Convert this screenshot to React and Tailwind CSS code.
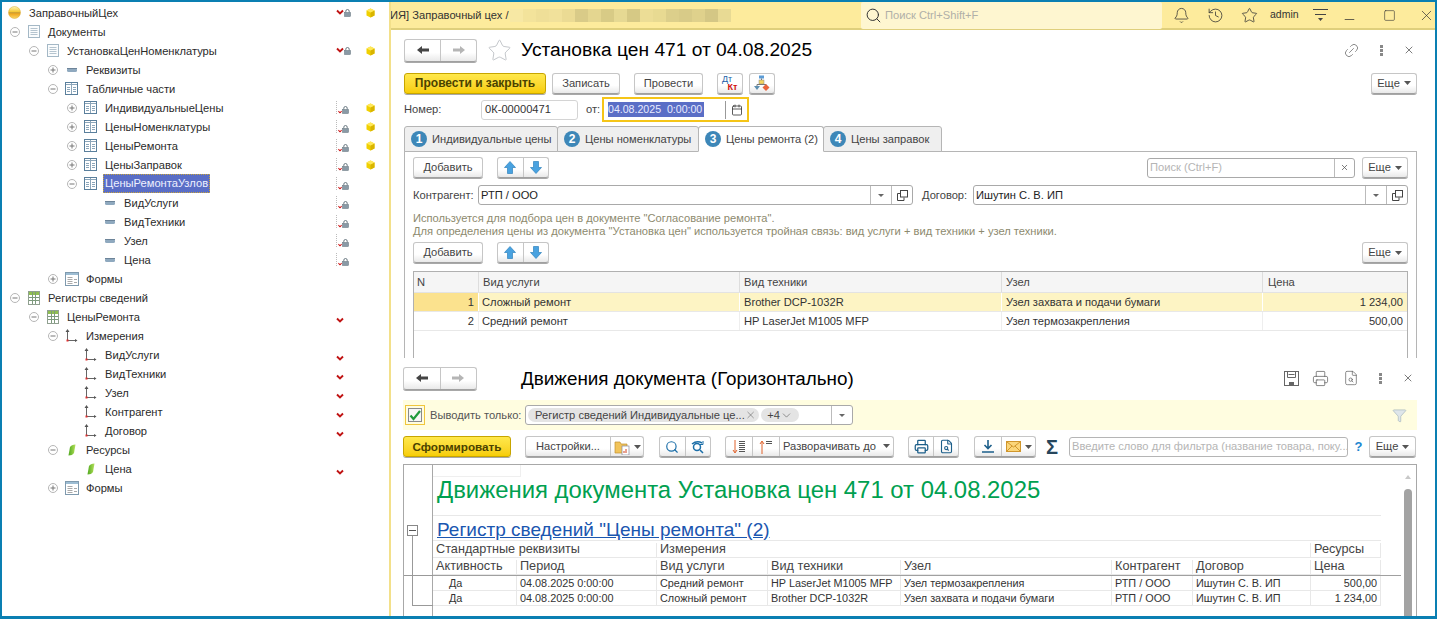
import { Bell, History, Star, Link2, X, Square, Minus, Search, Printer, FileSearch, Calendar, Funnel, ChevronDown } from 'lucide-react'

// tree data
const treeRows = [
  { pl: 'pl-[3px]', icon: 'root', text: 'ЗаправочныйЦех', flag: 'full', cube: true, noToggleCell: true },
  { pl: 'pl-[3px]', toggle: '-', icon: 'doc', text: 'Документы' },
  { pl: 'pl-[22px]', toggle: '-', icon: 'doc', text: 'УстановкаЦенНоменклатуры', flag: 'full', cube: true },
  { pl: 'pl-[41px]', toggle: '+', icon: 'attr', text: 'Реквизиты' },
  { pl: 'pl-[41px]', toggle: '-', icon: 'table', text: 'Табличные части' },
  { pl: 'pl-[60px]', toggle: '+', icon: 'table', text: 'ИндивидуальныеЦены', flag: 'small', cube: true },
  { pl: 'pl-[60px]', toggle: '+', icon: 'table', text: 'ЦеныНоменклатуры', flag: 'small', cube: true },
  { pl: 'pl-[60px]', toggle: '+', icon: 'table', text: 'ЦеныРемонта', flag: 'small', cube: true },
  { pl: 'pl-[60px]', toggle: '+', icon: 'table', text: 'ЦеныЗаправок', flag: 'small', cube: true },
  { pl: 'pl-[60px]', toggle: '-', icon: 'table', text: 'ЦеныРемонтаУзлов', flag: 'small', selected: true },
  { pl: 'pl-[79px]', icon: 'attr', text: 'ВидУслуги', flag: 'small' },
  { pl: 'pl-[79px]', icon: 'attr', text: 'ВидТехники', flag: 'small' },
  { pl: 'pl-[79px]', icon: 'attr', text: 'Узел', flag: 'small' },
  { pl: 'pl-[79px]', icon: 'attr', text: 'Цена', flag: 'small' },
  { pl: 'pl-[41px]', toggle: '+', icon: 'form', text: 'Формы' },
  { pl: 'pl-[3px]', toggle: '-', icon: 'reg', text: 'Регистры сведений' },
  { pl: 'pl-[22px]', toggle: '-', icon: 'reg', text: 'ЦеныРемонта', flag: 'check' },
  { pl: 'pl-[41px]', toggle: '-', icon: 'axes', text: 'Измерения' },
  { pl: 'pl-[60px]', icon: 'axes', text: 'ВидУслуги', flag: 'check' },
  { pl: 'pl-[60px]', icon: 'axes', text: 'ВидТехники', flag: 'check' },
  { pl: 'pl-[60px]', icon: 'axes', text: 'Узел', flag: 'check' },
  { pl: 'pl-[60px]', icon: 'axes', text: 'Контрагент', flag: 'check' },
  { pl: 'pl-[60px]', icon: 'axes', text: 'Договор', flag: 'check' },
  { pl: 'pl-[41px]', toggle: '-', icon: 'leaf', text: 'Ресурсы' },
  { pl: 'pl-[60px]', icon: 'leaf', text: 'Цена', flag: 'check' },
  { pl: 'pl-[41px]', toggle: '+', icon: 'form', text: 'Формы' },
]

const blurBlocks = ['#f7e8a4', '#f3e39b', '#efdf98', '#f1e19b', '#ebdb94', '#d9cb88', '#e4d690', '#d8cb86', '#e6d993', '#d6c985', '#ecdd96', '#e8da92', '#dccf8b', '#d8cb88', '#dfd18c', '#d4c785', '#e8da94']

const priceRows = [
  { n: 1, service: 'Сложный ремонт', model: 'Brother DCP-1032R', node: 'Узел захвата и подачи бумаги', price: '1 234,00', active: true },
  { n: 2, service: 'Средний ремонт', model: 'HP LaserJet M1005 MFP', node: 'Узел термозакрепления', price: '500,00' },
]

const reportRows = [
  ['Да', '04.08.2025 0:00:00', 'Средний ремонт', 'HP LaserJet M1005 MFP', 'Узел термозакрепления', 'РТП / ООО', 'Ишутин С. В. ИП', '500,00'],
  ['Да', '04.08.2025 0:00:00', 'Сложный ремонт', 'Brother DCP-1032R', 'Узел захвата и подачи бумаги', 'РТП / ООО', 'Ишутин С. В. ИП', '1 234,00'],
]

const reportHead = ['Активность', 'Период', 'Вид услуги', 'Вид техники', 'Узел', 'Контрагент', 'Договор', 'Цена']

// tree icons
const TreeIcon = ({ type }) => {
  if (type === 'root') {
    return (
      <svg width="13" height="13" viewBox="0 0 13 13">
        <defs>
          <linearGradient id="rootBall" x1="0" y1="0" x2="0" y2="1">
            <stop offset="0" stopColor="#fff6b8" />
            <stop offset="0.42" stopColor="#f6cb3a" />
            <stop offset="0.52" stopColor="#c79a34" />
            <stop offset="0.62" stopColor="#f0a820" />
            <stop offset="1" stopColor="#f9d768" />
          </linearGradient>
        </defs>
        <circle cx="6.5" cy="6.5" r="6" fill="url(#rootBall)" stroke="#dcaa2c" strokeWidth="0.5" />
      </svg>
    )
  }
  if (type === 'doc') {
    return (
      <svg width="14" height="15" viewBox="0 0 14 15">
        <rect x="1.5" y="1.5" width="11" height="12" fill="#fafcfd" stroke="#a4b8c6" />
        <path d="M3.5 4.5h7M3.5 6.5h7M3.5 8.5h7M3.5 10.5h7" stroke="#b5c4cf" />
      </svg>
    )
  }
  if (type === 'attr') {
    return (
      <svg width="12" height="6" viewBox="0 0 12 6">
        <rect x="1" y="1" width="10" height="4" rx="1.5" fill="#8fa9bf" />
        <rect x="1" y="1" width="10" height="1" fill="#6d8499" />
      </svg>
    )
  }
  if (type === 'table') {
    return (
      <svg width="13" height="13" viewBox="0 0 13 13">
        <rect x="0.5" y="0.5" width="12" height="12" fill="#fff" stroke="#5a7f9c" />
        <path d="M1 2.5h11M6.5 1v11M2 5.5h3M8 5.5h3M2 7.5h3M8 7.5h3M2 9.5h3M8 9.5h3" stroke="#8ca6ba" />
      </svg>
    )
  }
  if (type === 'form') {
    return (
      <svg width="14" height="14" viewBox="0 0 14 14">
        <rect x="0.5" y="0.5" width="13" height="13" fill="#fff" stroke="#7f9aae" />
        <rect x="1" y="1" width="12" height="2" fill="#9dbdd3" />
        <path d="M2.5 5.5h5M2.5 7.5h5M2.5 9.5h5M2.5 11.5h5M9 7.5h3M9 10.5h3" stroke="#a9a9a9" />
      </svg>
    )
  }
  if (type === 'reg') {
    return (
      <svg width="14" height="14" viewBox="0 0 14 14">
        <rect x="1.5" y="0.5" width="11" height="13" fill="#fff" stroke="#90a090" />
        <rect x="2" y="1" width="10" height="3" fill="#8fbf50" />
        <path d="M2 6.5h10M2 9.5h10M5.5 1v12M8.5 1v12" stroke="#7d9a7d" />
      </svg>
    )
  }
  if (type === 'axes') {
    return (
      <svg width="13" height="14" viewBox="0 0 13 14">
        <path d="M2.5 12V1.5M2.5 11.5H11" stroke="#666" fill="none" />
        <path d="M2.5 0L4.5 3h-4zM10 10l2.5 1.5L10 13z" fill="#555" />
        <rect x="1.5" y="10.5" width="2" height="2" fill="#e03030" />
      </svg>
    )
  }
  return (
    <svg width="8" height="12" viewBox="0 0 8 12">
      <defs>
        <linearGradient id="leafFill" x1="0" y1="0" x2="1" y2="0">
          <stop offset="0" stopColor="#4ea81e" />
          <stop offset="1" stopColor="#b5e05a" />
        </linearGradient>
      </defs>
      <path d="M2 3Q3.5 0.5 7.5 0.5L6 9Q4.5 11.5 0.5 11.5z" fill="url(#leafFill)" />
    </svg>
  )
}

const RedCheck = ({ size = 8 }) => (
  <svg width={size} height={size - 2} viewBox="0 0 8 6">
    <path d="M1 1.5l3 3 3-3" fill="none" stroke="#c01414" strokeWidth="1.9" />
  </svg>
)

const LockIcon = () => (
  <svg width="7" height="8" viewBox="0 0 7 8">
    <path d="M1.8 3.5V2.2a1.7 1.7 0 0 1 3.4 0v1.3" fill="none" stroke="#66767f" />
    <rect x="0.5" y="3.5" width="6" height="4" fill="#8a9aa6" stroke="#5f6f79" strokeWidth="0.5" />
  </svg>
)

const TreeFlag = ({ type }) => {
  if (type === 'full') {
    return (
      <span className="flex items-start gap-0 pl-[2px]">
        <RedCheck />
        <LockIcon />
      </span>
    )
  }
  if (type === 'small') {
    return (
      <span className="flex items-end">
        <span className="w-[6px] h-[13px] border-l border-dotted border-[#bbb] flex items-end">
          <svg width="5" height="4" viewBox="0 0 5 4" className="ml-[1px]">
            <path d="M0.5 1l2 2 2-2" fill="none" stroke="#d01818" strokeWidth="1.3" />
          </svg>
        </span>
        <LockIcon />
      </span>
    )
  }
  return (
    <span className="mt-[6px] -ml-[4px]">
      <RedCheck />
    </span>
  )
}

const Cube = () => (
  <svg width="9" height="10" viewBox="0 0 9 10">
    <path d="M4.5 0.5L8.5 2.5V7.5L4.5 9.5L0.5 7.5V2.5z" fill="#f0d000" />
    <path d="M4.5 4.5L8.5 2.5V7.5L4.5 9.5z" fill="#d9b400" />
    <path d="M4.5 0.5L8.5 2.5 4.5 4.5 0.5 2.5z" fill="#ffe85a" />
  </svg>
)

const Toggle = ({ kind }) => (
  <svg width="10" height="10" viewBox="0 0 10 10">
    <circle cx="5" cy="5" r="4.5" fill="#fff" stroke="#b5b5b5" />
    <path d={kind === '+' ? 'M2.5 5h5M5 2.5v5' : 'M2.5 5h5'} stroke="#777" />
  </svg>
)

const TreeRow = ({ row }) => (
  <div className={`flex items-center h-[19px] pr-[5px] ${row.pl}`}>
    {!row.noToggleCell && (
      <span className="w-[19px] flex justify-center shrink-0">{row.toggle && <Toggle kind={row.toggle} />}</span>
    )}
    <span className="w-[19px] h-[19px] flex items-center justify-center shrink-0">
      <TreeIcon type={row.icon} />
    </span>
    <span className="flex-1 min-w-0 pl-[3px]">
      <span
        className={
          row.selected
            ? 'inline-block px-[2px] h-[19px] leading-[18px] bg-[#5a6ec6] text-[#eef0ff] outline-1 outline-dotted outline-[#c9a53a] -outline-offset-1'
            : 'inline-block px-[2px] leading-[18px] text-[#2b2b2b]'
        }
      >
        {row.text}
      </span>
    </span>
    <span className="w-[28px] flex justify-center shrink-0">{row.flag && <TreeFlag type={row.flag} />}</span>
    <span className="w-[28px] flex justify-center shrink-0">{row.cube && <Cube />}</span>
  </div>
)

// buttons
const btn = 'flex items-center justify-center border border-[#c6c6c6] border-b-[#a0a0a0] rounded-[3px] bg-linear-to-b from-white from-60% to-[#e9e9e9] shadow-[0_1px_0_#a8a8a8] text-[#444] shrink-0 whitespace-nowrap'
const yellowBtn = 'flex items-center justify-center border border-[#c7a500] rounded-[3px] bg-linear-to-b from-[#ffe84a] to-[#f7cd00] shadow-[0_1px_0_#a8a8a8] text-[#4a4200] font-bold shrink-0 whitespace-nowrap'
const divider = 'w-px self-stretch bg-[#c6c6c6]'

const Caret = () => (
  <svg width="7" height="4" viewBox="0 0 7 4" className="shrink-0">
    <path d="M0 0h7L3.5 4z" fill="#555" />
  </svg>
)

const MoreBtn = ({ cls = 'w-[46px]' }) => (
  <div className={`${btn} gap-[4px] h-[21px] ${cls}`}>
    Еще <Caret />
  </div>
)

const ThickArrow = ({ dir, color }) => (
  <svg width="14" height="10" viewBox="0 0 14 10">
    {dir === 'left' ? (
      <path d="M1 5l5-4v2.5h7v3H6V9z" fill={color} />
    ) : (
      <path d="M13 5L8 1v2.5H1v3h7V9z" fill={color} />
    )}
  </svg>
)

const NavGroup = ({ cls = 'w-[73px]' }) => (
  <div className={`${btn} h-[23px] ${cls}`}>
    <span className="flex-1 flex justify-center"><ThickArrow dir="left" color="#444" /></span>
    <span className={divider} />
    <span className="flex-1 flex justify-center"><ThickArrow dir="right" color="#b5b5b5" /></span>
  </div>
)

const BlueArrow = ({ up }) => (
  <svg width="12" height="13" viewBox="0 0 12 13">
    <path
      d={up ? 'M6 0.5L11.5 6.5H8.5V12.5H3.5V6.5H0.5z' : 'M6 12.5L11.5 6.5H8.5V0.5H3.5V6.5H0.5z'}
      fill="#49a2e0"
      stroke="#2f83bd"
      strokeWidth="0.7"
    />
  </svg>
)

const AddRow = ({ children }) => (
  <div className="flex items-center h-[21px]">
    <div className={`${btn} h-[21px] w-[70px]`}>Добавить</div>
    <div className={`${btn} h-[21px] w-[52px] ml-[14px]`}>
      <span className="flex-1 flex justify-center"><BlueArrow up /></span>
      <span className={divider} />
      <span className="flex-1 flex justify-center"><BlueArrow /></span>
    </div>
    <div className="flex-1" />
    {children}
  </div>
)

const Combo = ({ label, value, cls, labelCls }) => (
  <div className={`flex items-center ${cls}`}>
    <span className={`text-[#444] shrink-0 ${labelCls}`}>{label}</span>
    <div className="flex-1 h-[20px] flex items-center border border-[#a9a9a9] rounded-[3px] bg-white">
      <span className="flex-1 pl-[2px] text-[#222]">{value}</span>
      <span className="w-[21px] h-full border-l border-[#bbb] flex items-center justify-center">
        <svg width="6" height="3" viewBox="0 0 6 3"><path d="M0 0h6L3 3z" fill="#666" /></svg>
      </span>
      <span className="w-[21px] h-full border-l border-[#bbb] flex items-center justify-center">
        <svg width="11" height="11" viewBox="0 0 11 11" fill="none" stroke="#444">
          <rect x="3.5" y="0.5" width="7" height="6.5" />
          <path d="M3.5 3.5H.5v7H7V7.5" />
        </svg>
      </span>
    </div>
  </div>
)

const tabs = [
  { n: 1, label: 'Индивидуальные цены', cls: 'w-[154px]' },
  { n: 2, label: 'Цены номенклатуры', cls: 'w-[142px]' },
  { n: 3, label: 'Цены ремонта (2)', cls: 'w-[126px]', active: true },
  { n: 4, label: 'Цены заправок', cls: 'w-[119px]' },
]

const Tab = ({ tab }) => (
  <div
    className={`${tab.cls} h-[26px] flex items-center gap-[5px] pl-[6px] border border-[#b5b5b5] rounded-t-[3px] -mr-px text-[#444] whitespace-nowrap ${
      tab.active ? 'bg-white border-b-white z-10' : 'bg-[#efefef]'
    }`}
  >
    <span className="w-[16px] h-[16px] rounded-full bg-[#3d87b8] text-white font-bold text-[12px] leading-[16px] text-center shrink-0">{tab.n}</span>
    {tab.label}
  </div>
)

const DotsV = () => (
  <svg width="3" height="11" viewBox="0 0 3 11">
    <rect x="0" y="0" width="3" height="3" fill="#888" />
    <rect x="0" y="4" width="3" height="3" fill="#888" />
    <rect x="0" y="8" width="3" height="3" fill="#888" />
  </svg>
)

const TreeLines = ({ accent, up }) => (
  <svg width="16" height="16" viewBox="0 0 16 16" fill="none">
    <path d={up ? 'M4 15V3M2 5l2-3 2 3' : 'M4 1v12M2 11l2 3 2-3'} stroke={accent} />
    <path d={up ? 'M8 2.5h6M8 4.5h6' : 'M8 2.5h6M8 4.5h6M8 6.5h6M8 8.5h6M8 10.5h6M8 12.5h6'} stroke="#555" />
  </svg>
)

const FloppyIcon = () => (
  <svg width="15" height="15" viewBox="0 0 15 15" fill="none" stroke="#666">
    <rect x="0.5" y="0.5" width="14" height="14" />
    <path d="M3.5 1v5.5h8V1M4.5 3.5h6" />
    <rect x="5" y="11" width="5" height="4" fill="#666" stroke="none" />
  </svg>
)

const cellPad = 'border-r border-b border-[#e8e8e8] px-[3px] flex items-center min-w-0 whitespace-nowrap overflow-hidden'

const App = () => {
  return (
    <div className="w-[1437px] h-[619px] flex overflow-hidden bg-white border-t-2 border-l-2 border-r-2 border-b-[3px] border-[#0a7fb2] text-[11.15px] [font-family:'Liberation_Sans',Arial,sans-serif]">
      {/* metadata tree */}
      <div className="w-[387px] shrink-0 pt-[1px]">
        {treeRows.map((row, i) => <TreeRow key={i} row={row} />)}
      </div>

      <div className="flex-1 min-w-0 flex flex-col border-l-2 border-[#f3e08a] overflow-hidden">
        {/* title bar */}
        <div className="h-[28px] shrink-0 flex items-center bg-[#fdeb9c] border-b-2 border-[#dfcf7c] text-[#333] -ml-[2px]">
          <span className="w-[121px] shrink-0 pl-[1px] whitespace-nowrap overflow-hidden">ИЯ] Заправочный цех /</span>
          <div className="flex h-[13px] shrink-0">
            {blurBlocks.map((c, i) => <span key={i} className="w-[13px] h-full" style={{ background: c }} />)}
          </div>
          <div className="ml-[130px] w-[301px] h-[27px] shrink-0 flex items-center gap-[3px] pl-[4px] bg-[#fef6d0] rounded-[2px] text-[#b0b0a8]">
            <Search size={17} strokeWidth={1.4} className="text-[#333]" />
            Поиск Ctrl+Shift+F
          </div>
          <div className="flex-1 flex items-center text-[#333]">
            <Bell size={17} strokeWidth={1.1} className="ml-[11px]" />
            <History size={17} strokeWidth={1.1} className="ml-[17px]" />
            <Star size={17} strokeWidth={1.1} className="ml-[17px]" />
            <span className="ml-[12px] text-[10.5px]">admin</span>
            <svg width="15" height="14" viewBox="0 0 15 14" className="ml-[14px]">
              <path d="M0 1.5h15M2 6.5h11" stroke="#444" />
              <path d="M5 10h5l-2.5 3z" fill="#444" />
            </svg>
            <Minus size={15} strokeWidth={1.2} className="ml-[14px] mt-[8px]" />
            <Square size={13} strokeWidth={1.1} className="ml-[26px]" />
            <X size={17} strokeWidth={1} className="ml-[22px]" />
          </div>
        </div>

        {/* document form */}
        <div className="h-[330px] shrink-0 flex flex-col pt-[8px] pl-[13px] pr-[18px] pb-[2px] overflow-hidden">
          <div className="h-[24px] shrink-0 flex items-center">
            <NavGroup />
            <Star size={25} strokeWidth={0.8} className="ml-[10px] text-[#b8bcc0]" />
            <span className="ml-[9px] text-[19.2px] text-black whitespace-nowrap">Установка цен 471 от 04.08.2025</span>
            <div className="flex-1" />
            <Link2 size={17} strokeWidth={1} className="-rotate-45 text-[#666]" />
            <span className="ml-[20px]"><DotsV /></span>
            <X size={12} strokeWidth={1.4} className="ml-[20px] mr-[2px] text-[#444]" />
          </div>

          <div className="h-[22px] mt-[10px] shrink-0 flex items-center">
            <div className={`${yellowBtn} h-[21px] w-[142px] text-[12px]`}>Провести и закрыть</div>
            <div className={`${btn} h-[21px] w-[68px] ml-[6px]`}>Записать</div>
            <div className={`${btn} h-[21px] w-[69px] ml-[14px]`}>Провести</div>
            <div className={`${btn} h-[21px] w-[26px] ml-[14px] flex-col leading-none`}>
              <span className="text-[9px] text-[#1b5fa8] -ml-[6px]">Дт</span>
              <span className="text-[9px] text-[#d01010] font-bold ml-[5px] -mt-[1px]">Кт</span>
            </div>
            <div className={`${btn} h-[21px] w-[26px] ml-[6px]`}>
              <svg width="16" height="16" viewBox="0 0 16 16">
                <rect x="5" y="0.5" width="5" height="3" fill="#5b9bd5" />
                <rect x="5" y="5" width="5" height="4" fill="#f3d35c" stroke="#888" strokeWidth="0.5" />
                <path d="M7.5 3.5V5M3 12V9.5h9V11" stroke="#777" fill="none" />
                <path d="M0 11h6l-3 4z" fill="#5e8fb0" />
                <path d="M12 9l3.5 3.5L12 16l-3.5-3.5z" fill="#e8643c" />
              </svg>
            </div>
            <div className="flex-1" />
            <MoreBtn />
          </div>

          <div className="h-[25px] mt-[3px] shrink-0 flex items-center">
            <span className="w-[77px] text-[#444]">Номер:</span>
            <div className="w-[97px] h-[20px] pl-[3px] flex items-center border border-[#d4d4d4] rounded-[3px] text-[#333]">0К-00000471</div>
            <span className="ml-[8px] w-[15px] text-[#444]">от:</span>
            <div className="ml-[1px] w-[147px] h-[25px] flex items-center border-2 border-[#f5c518] pl-[4px]">
              <span className="w-[96px] h-[15px] leading-[15px] bg-[#5a6ec6] text-[10.6px] text-[#e8ebff] whitespace-pre">04.08.2025  0:00:00</span>
              <span className="ml-[21px] w-px h-[18px] bg-[#999]" />
              <Calendar size={12} strokeWidth={1.6} className="ml-[5px] text-[#333]" />
            </div>
          </div>

          <div className="h-[26px] mt-[4px] shrink-0 flex relative">
            {tabs.map((tab) => <Tab key={tab.n} tab={tab} />)}
          </div>

          {/* tab page */}
          <div className="flex-1 min-h-0 -mt-px border border-b-0 border-[#b5b5b5] px-[8px] pt-[5px] overflow-hidden">
            <AddRow>
              <div className="w-[208px] h-[20px] flex items-center border border-[#a9a9a9] rounded-[3px] text-[#b5b5b5] mr-[7px]">
                <span className="flex-1 pl-[2px]">Поиск (Ctrl+F)</span>
                <span className="w-[20px] h-full border-l border-[#bbb] flex items-center justify-center text-[#555]">
                  <X size={9} strokeWidth={2} />
                </span>
              </div>
              <MoreBtn />
            </AddRow>

            <div className="flex h-[20px] mt-[7px]">
              <Combo label="Контрагент:" value="РТП / ООО" cls="w-[500px]" labelCls="w-[65px]" />
              <Combo label="Договор:" value="Ишутин С. В. ИП" cls="flex-1 ml-[9px]" labelCls="w-[51px]" />
            </div>

            <div className="mt-[7px] leading-[13px] text-[#8d8a6e] whitespace-nowrap">
              <div>Используется для подбора цен в документе "Согласование ремонта".</div>
              <div>Для определения цены из документа "Установка цен" используется тройная связь: вид услуги + вид техники + узел техники.</div>
            </div>

            <div className="mt-[4px]">
              <AddRow><MoreBtn /></AddRow>
            </div>

            <div className="mt-[8px] h-[200px] border border-b-0 border-[#b0b0b0]">
              <div className="grid grid-cols-[65px_261px_262px_261px_1fr] h-[21px] bg-[#f5f5f5] text-[#444] border-b border-[#e3e3e3]">
                <span className="pl-[3px] flex items-center border-r border-[#ddd]">N</span>
                <span className="pl-[4px] flex items-center border-r border-[#ddd]">Вид услуги</span>
                <span className="pl-[4px] flex items-center border-r border-[#ddd]">Вид техники</span>
                <span className="pl-[4px] flex items-center border-r border-[#ddd]">Узел</span>
                <span className="pl-[5px] flex items-center">Цена</span>
              </div>
              {priceRows.map((row) => (
                <div
                  key={row.n}
                  className={`grid grid-cols-[65px_261px_262px_261px_1fr] h-[19px] text-[#333] border-b border-[#e8e8e8] ${row.active ? 'bg-[#fdf4c4]' : ''}`}
                >
                  <span className={`pr-[4px] flex items-center justify-end border-r ${row.active ? 'bg-[#fbe28e] border-white' : 'border-[#eee]'}`}>{row.n}</span>
                  <span className={`pl-[3px] flex items-center border-r ${row.active ? 'border-white' : 'border-[#eee]'}`}>{row.service}</span>
                  <span className={`pl-[4px] flex items-center border-r ${row.active ? 'border-white' : 'border-[#eee]'}`}>{row.model}</span>
                  <span className={`pl-[4px] flex items-center border-r ${row.active ? 'border-white' : 'border-[#eee]'}`}>{row.node}</span>
                  <span className="pr-[4px] flex items-center justify-end">{row.price}</span>
                </div>
              ))}
            </div>
          </div>
        </div>

        {/* report window */}
        <div className="flex-1 min-h-0 flex flex-col pt-[6px] pl-[12px] pr-[18px] bg-white">
          <div className="h-[24px] shrink-0 flex items-center">
            <NavGroup cls="w-[74px]" />
            <span className="ml-[44px] pt-[2px] text-[18.85px] text-black whitespace-nowrap">Движения документа (Горизонтально)</span>
            <div className="flex-1" />
            <FloppyIcon />
            <Printer size={17} strokeWidth={1} className="ml-[13px] text-[#555]" />
            <FileSearch size={16} strokeWidth={1} className="ml-[14px] text-[#555]" />
            <span className="ml-[20px]"><DotsV /></span>
            <X size={12} strokeWidth={1.4} className="ml-[20px] mr-[3px] text-[#444]" />
          </div>

          <div className="h-[30px] mt-[10px] shrink-0 flex items-center bg-[#fffde0]">
            <div className="ml-[2px] w-[20px] h-[20px] flex items-center justify-center border border-[#f0c63c]">
              <div className="w-[14px] h-[14px] border border-[#8a8a8a] bg-[#f6f6f6] flex items-center justify-center">
                <svg width="12" height="11" viewBox="0 0 12 11"><path d="M1.5 5.5L4.5 9 11 1" fill="none" stroke="#1f9a3c" strokeWidth="2.2" /></svg>
              </div>
            </div>
            <span className="ml-[5px] w-[91px] shrink-0 text-[#555] whitespace-nowrap">Выводить только:</span>
            <div className="ml-[4px] w-[328px] h-[20px] flex items-center border border-[#a9a9a9] rounded-[3px] bg-white pl-[2px]">
              <span className="w-[231px] h-[14px] flex items-center rounded-full bg-[#e4e4e4] pl-[7px] text-[#444] whitespace-nowrap">
                <span className="flex-1">Регистр сведений Индивидуальные це...</span>
                <X size={12} strokeWidth={1} className="mr-[3px]" />
              </span>
              <span className="ml-[2px] w-[38px] h-[14px] flex items-center justify-center rounded-full bg-[#e4e4e4] text-[#444]">
                +4<ChevronDown size={13} strokeWidth={1} />
              </span>
              <div className="flex-1" />
              <span className="w-[21px] h-full border-l border-[#bbb] flex items-center justify-center">
                <svg width="6" height="3" viewBox="0 0 6 3"><path d="M0 0h6L3 3z" fill="#666" /></svg>
              </span>
            </div>
            <div className="flex-1" />
            <Funnel size={15} strokeWidth={1} className="mr-[10px] text-[#9fb0b8] fill-[#dfe6ea]" />
          </div>

          <div className="h-[21px] mt-[6px] shrink-0 flex items-center">
            <div className={`${yellowBtn} h-[21px] w-[108px] text-[11.7px]`}>Сформировать</div>
            <div className={`${btn} h-[21px] w-[119px] ml-[14px]`}>
              <span className="w-[84px] text-center">Настройки...</span>
              <span className={divider} />
              <span className="flex-1 flex items-center justify-center gap-[3px]">
                <svg width="17" height="16" viewBox="0 0 17 16">
                  <path d="M1 3h5l1 2h6v9H1z" fill="#f2c45a" stroke="#c09030" strokeWidth="0.7" />
                  <rect x="8" y="7" width="7" height="9" fill="#fff" stroke="#889" strokeWidth="0.7" />
                  <path d="M10 14v-2M12 14v-4" stroke="#d04020" />
                </svg>
                <Caret />
              </span>
            </div>
            <div className={`${btn} h-[21px] w-[52px] ml-[15px]`}>
              <span className="flex-1 flex justify-center"><Search size={14} strokeWidth={2} className="text-[#1b6ea8]" /></span>
              <span className={divider} />
              <span className="flex-1 flex justify-center">
                <svg width="14" height="14" viewBox="0 0 14 14" fill="none" stroke="#1b6ea8" strokeWidth="1.5">
                  <circle cx="6" cy="7" r="3.5" />
                  <path d="M9 10l3 3M1 4q5-4 10-1" />
                  <path d="M12 1v3.5H8.5" strokeWidth="1" />
                </svg>
              </span>
            </div>
            <div className={`${btn} h-[21px] w-[169px] ml-[14px]`}>
              <span className="w-[26px] flex justify-center"><TreeLines accent="#e0622c" /></span>
              <span className={divider} />
              <span className="w-[26px] flex justify-center"><TreeLines accent="#e0622c" up /></span>
              <span className={divider} />
              <span className="flex-1 flex items-center justify-center gap-[7px]">Разворачивать до <Caret /></span>
            </div>
            <div className={`${btn} h-[21px] w-[51px] ml-[14px]`}>
              <span className="flex-1 flex justify-center"><Printer size={15} strokeWidth={2} className="text-[#1d5f8a]" /></span>
              <span className={divider} />
              <span className="flex-1 flex justify-center"><FileSearch size={15} strokeWidth={1.8} className="text-[#1d5f8a]" /></span>
            </div>
            <div className={`${btn} h-[21px] w-[62px] ml-[15px]`}>
              <span className="w-[26px] flex justify-center">
                <svg width="14" height="13" viewBox="0 0 14 13" fill="none" stroke="#1d5f8a" strokeWidth="1.6">
                  <path d="M7 0v8M3.5 5L7 8.5 10.5 5M1 12h12" />
                </svg>
              </span>
              <span className={divider} />
              <span className="flex-1 flex items-center justify-center gap-[4px]">
                <svg width="15" height="11" viewBox="0 0 15 11">
                  <rect x="0.5" y="0.5" width="14" height="10" fill="#fbd67a" stroke="#d0962c" />
                  <path d="M1 1l6.5 5L14 1M1 10l5-5M14 10L9 5" fill="none" stroke="#d0962c" />
                </svg>
                <Caret />
              </span>
            </div>
            <span className="ml-[8px] w-[16px] text-center text-[20px] font-bold leading-none text-[#26465c]">Σ</span>
            <div className="ml-[9px] w-[279px] h-[20px] pl-[2px] flex items-center border border-[#b5b5b5] rounded-[3px] text-[#b5b5b5] whitespace-nowrap overflow-hidden">
              Введите слово для фильтра (название товара, поку...
            </div>
            <span className="w-[21px] text-center font-bold text-[#1b86d0] text-[13px]">?</span>
            <MoreBtn cls="w-[47px]" />
          </div>

          {/* spreadsheet */}
          <div className="flex-1 min-h-0 mt-[7px] flex border border-b-0 border-[#a8a8a8] overflow-hidden">
            <div className="w-[29px] shrink-0 relative border-r border-[#a8a8a8]">
              <div className="absolute left-[3px] top-[60px] w-[11px] h-[11px] border border-[#888] bg-white flex items-center justify-center">
                <span className="w-[7px] h-px bg-[#555]" />
              </div>
              <div className="absolute left-[8px] top-[71px] w-[21px] h-[70px] border-l border-b border-[#999]" />
              <div className="absolute left-0 top-[110px] w-[29px] h-px bg-[#999]" />
            </div>

            <div className="flex-1 min-w-0">
              <div className="w-[968px] border-b border-[#a0a0a0]">
                <div className="w-[88px] h-[12px] border-r border-b border-[#efefef]" />
                <div className="h-[39px] w-[948px] flex items-center pl-[4px] pb-[12px] border-b border-[#e8e8e8] text-[23.9px] text-[#00a050] whitespace-nowrap">
                  Движения документа Установка цен 471 от 04.08.2025
                </div>
                <div className="h-[25px] w-[948px] flex items-center pl-[4px] pt-[4px] border-b border-[#e8e8e8] text-[19px]">
                  <span className="text-[#1a56b0] underline">Регистр сведений "Цены ремонта" (2)</span>
                </div>
                <div className="w-[948px] grid grid-cols-[224px_654px_70px] h-[17px] pt-[2px] text-[12.7px] text-[#444]">
                  <span className={cellPad}>Стандартные реквизиты</span>
                  <span className={cellPad}>Измерения</span>
                  <span className={cellPad}>Ресурсы</span>
                </div>
                <div className="w-[948px] grid grid-cols-[84px_140px_111px_133px_211px_81px_118px_70px] h-[17px] pt-[2px] text-[12.7px] text-[#444]">
                  {reportHead.map((h) => <span key={h} className={cellPad}>{h}</span>)}
                </div>
              </div>
              {reportRows.map((row, i) => (
                <div key={i} className="w-[948px] grid grid-cols-[84px_140px_111px_133px_211px_81px_118px_70px] h-[15px] text-[10.85px] text-[#333]">
                  {row.map((cell, j) => (
                    <span
                      key={j}
                      className={`${cellPad} ${j === 0 ? 'pl-[16px]' : ''} ${j === 7 ? 'justify-end' : ''}`}
                    >
                      {cell}
                    </span>
                  ))}
                </div>
              ))}
            </div>

            <div className="w-[14px] shrink-0 flex flex-col items-center pr-[2px]">
              <svg width="6" height="4" viewBox="0 0 6 4" className="mt-[10px]"><path d="M3 0l3 4H0z" fill="#c8c8c8" /></svg>
              <div className="mt-[10px] w-[8px] flex-1 rounded-t-[4px] bg-[#a3a3a3]" />
            </div>
          </div>
        </div>
      </div>
    </div>
  )
}

export default App
